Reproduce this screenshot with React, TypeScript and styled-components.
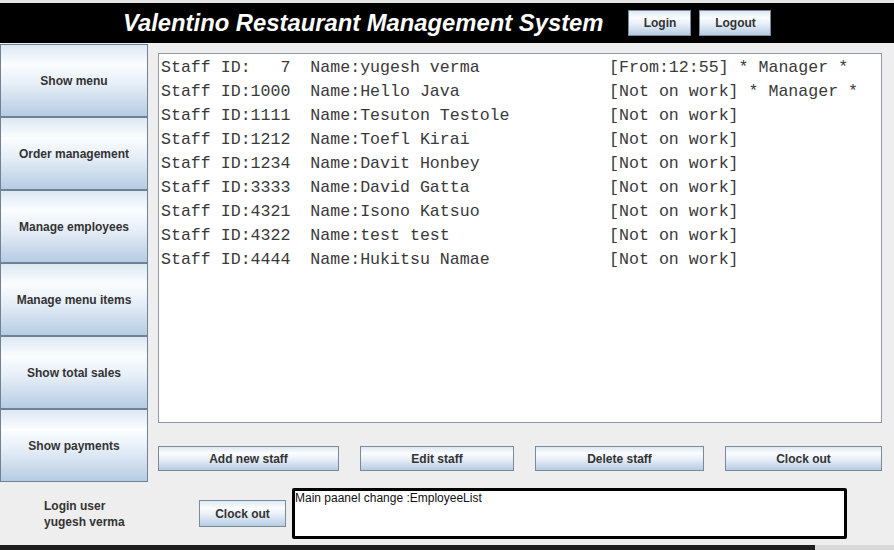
import React from "react";
import styled, { createGlobalStyle } from "styled-components";

const Global = createGlobalStyle`
  html, body { margin: 0; padding: 0; }
  body {
    width: 894px; height: 550px; overflow: hidden;
    background: #eeeeee;
    font-family: "Liberation Sans", Arial, sans-serif;
  }
`;

const Window = styled.div`
  width: 894px;
  height: 550px;
  display: flex;
  flex-direction: column;
  background: #eeeeee;
`;

const TopStrip = styled.div`
  height: 3px;
  background: #e4e4e4;
`;

const Header = styled.div`
  height: 40px;
  background: #000;
  display: flex;
  align-items: center;
  padding-left: 123px;
  box-sizing: border-box;
`;

const Title = styled.h1`
  margin: 0 25px 0 0;
  color: #fff;
  font-family: "Liberation Sans", Arial, sans-serif;
  font-style: italic;
  font-weight: bold;
  font-size: 23.8px;
  line-height: 1;
  white-space: nowrap;
`;

const JButton = styled.button<{ $w?: number; $h?: number }>`
  flex: none;
  width: ${(p) => (p.$w ? `${p.$w}px` : "auto")};
  height: ${(p) => (p.$h ? `${p.$h}px` : "26px")};
  box-sizing: border-box;
  border: 1px solid #7a8a99;
  border-radius: 0;
  padding: 0;
  margin: 0;
  background: linear-gradient(
    to bottom,
    #dde8f3 0%,
    #fbfdff 28%,
    #e6eef7 55%,
    #b6cce3 100%
  );
  font-family: "Liberation Sans", Arial, sans-serif;
  font-weight: bold;
  font-size: 12px;
  color: #333;
  display: flex;
  align-items: center;
  justify-content: center;
`;

const HeaderButtons = styled.div`
  display: flex;
  gap: 8px;
`;

const Main = styled.div`
  display: flex;
  margin-top: 1px;
  height: 438px;
`;

const Sidebar = styled.div`
  width: 148px;
  flex: none;
  display: flex;
  flex-direction: column;
`;

const SideButton = styled(JButton)`
  width: 148px;
  height: 73px;
  border: 1px solid #6f8193;
`;

const Content = styled.div`
  flex: 1;
  min-width: 0;
  padding: 9px 12px 0 10px;
  display: flex;
  flex-direction: column;
`;

const ListBox = styled.div`
  height: 370px;
  box-sizing: border-box;
  background: #fff;
  border: 1px solid #8e9aa6;
  padding: 2px 2px;
  font-family: "Liberation Mono", "Courier New", monospace;
  font-size: 16.6px;
  line-height: 24px;
  color: #3a3a3a;
  white-space: pre;
`;

const ListRow = styled.div``;

const ButtonRow = styled.div`
  margin-top: 23px;
  display: flex;
  gap: 21px;
`;

const Footer = styled.div`
  height: 63px;
  display: flex;
  align-items: center;
`;

const LoginLabel = styled.div`
  flex: none;
  width: 199px;
  box-sizing: border-box;
  padding-left: 44px;
  padding-top: 1px;
  font-weight: bold;
  font-size: 12px;
  line-height: 16px;
  color: #333;
`;

const MessageBox = styled.div`
  flex: none;
  margin-left: 6px;
  width: 555px;
  height: 51px;
  box-sizing: border-box;
  border: 3px solid #000;
  border-radius: 2px;
  background: #fff;
  font-size: 12px;
  line-height: 14px;
  color: #111;
  padding: 0;
`;

const BottomBar = styled.div`
  height: 5px;
  display: flex;
`;

const BottomDark = styled.div`
  width: 815px;
  background: #1e1e1e;
`;

const BottomLight = styled.div`
  flex: 1;
  background: #d8d8d8;
`;

const staff = [
  ["   7", "yugesh verma", "[From:12:55] * Manager *"],
  ["1000", "Hello Java", "[Not on work] * Manager *"],
  ["1111", "Tesuton Testole", "[Not on work]"],
  ["1212", "Toefl Kirai", "[Not on work]"],
  ["1234", "Davit Honbey", "[Not on work]"],
  ["3333", "David Gatta", "[Not on work]"],
  ["4321", "Isono Katsuo", "[Not on work]"],
  ["4322", "test test", "[Not on work]"],
  ["4444", "Hukitsu Namae", "[Not on work]"],
];

const sideItems = [
  "Show menu",
  "Order management",
  "Manage employees",
  "Manage menu items",
  "Show total sales",
  "Show payments",
];

export default function App() {
  return (
    <Window>
      <Global />
      <TopStrip />
      <Header>
        <Title>Valentino Restaurant Management System</Title>
        <HeaderButtons>
          <JButton $w={63}>Login</JButton>
          <JButton $w={72}>Logout</JButton>
        </HeaderButtons>
      </Header>
      <Main>
        <Sidebar>
          {sideItems.map((s) => (
            <SideButton key={s}>{s}</SideButton>
          ))}
        </Sidebar>
        <Content>
          <ListBox>
            {staff.map(([id, name, status]) => (
              <ListRow key={id}>
                {`Staff ID:${id}  Name:${name.padEnd(25, " ")}${status}`}
              </ListRow>
            ))}
          </ListBox>
          <ButtonRow>
            <JButton $w={181} $h={25}>Add new staff</JButton>
            <JButton $w={154} $h={25}>Edit staff</JButton>
            <JButton $w={169} $h={25}>Delete staff</JButton>
            <JButton $w={157} $h={25}>Clock out</JButton>
          </ButtonRow>
        </Content>
      </Main>
      <Footer>
        <LoginLabel>
          Login user
          <br />
          yugesh verma
        </LoginLabel>
        <JButton $w={87} $h={27}>Clock out</JButton>
        <MessageBox>Main paanel change :EmployeeList</MessageBox>
      </Footer>
      <BottomBar>
        <BottomDark />
        <BottomLight />
      </BottomBar>
    </Window>
  );
}
